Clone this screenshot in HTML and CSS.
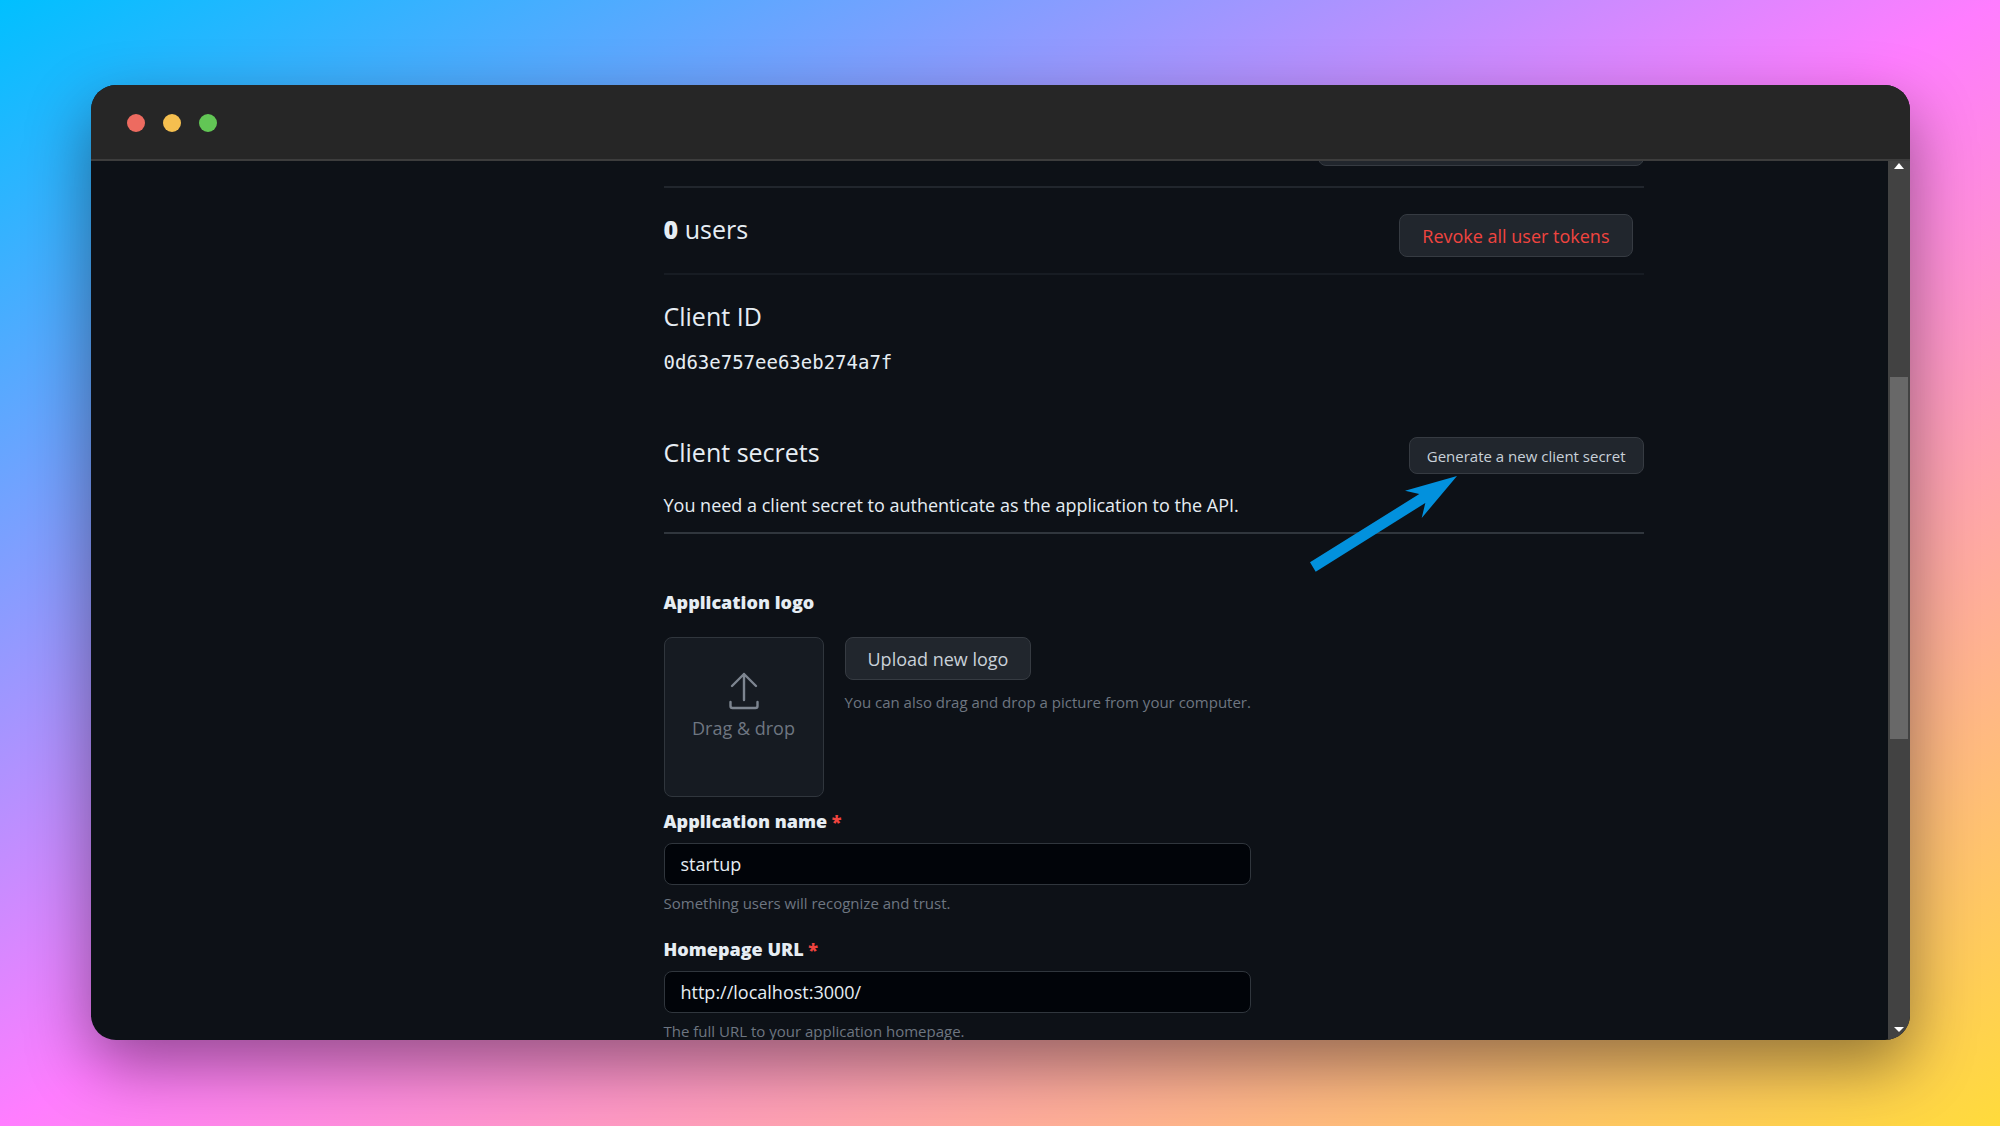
FILE: index.html
```html
<!DOCTYPE html>
<html lang="en">
<head>
    <meta charset="UTF-8">
    <meta name="viewport" content="width=device-width, initial-scale=1.0">
    <title>OAuth application settings</title>
    <link rel="stylesheet" href="styles.css">
</head>
<body>
    <div class="window">
        <div class="title-bar">
            <span class="dot dot-red"></span>
            <span class="dot dot-yellow"></span>
            <span class="dot dot-green"></span>
        </div>

        <div class="viewport">
            <div class="page">
                <main class="settings">
                    <div class="transfer">
                        <button type="button" class="btn btn-wide" aria-label="Transfer ownership"></button>
                    </div>

                    <section class="users">
                        <h2><strong>0</strong> users</h2>
                        <button type="button" class="btn btn-danger">Revoke all user tokens</button>
                    </section>

                    <section class="client-id">
                        <h2>Client ID</h2>
                        <code>0d63e757ee63eb274a7f</code>
                    </section>

                    <section class="secrets">
                        <div class="secrets-header">
                            <h2>Client secrets</h2>
                            <button type="button" class="btn btn-small">Generate a new client secret</button>
                        </div>
                        <p>You need a client secret to authenticate as the application to the API.</p>
                        <svg class="arrow" width="147" height="96" viewBox="0 0 147 96" aria-hidden="true">
                            <path d="M147 0 L95 14.7 L109.3 18 L0 86.3 L5.7 95.7 L115.3 27 L111.7 42 Z" fill="#0291dd"/>
                        </svg>
                    </section>

                    <form>
                        <h3>Application logo</h3>
                        <div class="logo">
                            <div class="drop-zone">
                                <svg width="30" height="38" viewBox="0 0 30 38" fill="none" stroke="#7d8590" stroke-width="2.4" stroke-linecap="round" stroke-linejoin="round" aria-hidden="true">
                                    <path d="M15 28V2M3 14L15 2L27 14"/>
                                    <path d="M1.5 30v4q0 2 2 2h23q2 0 2-2v-4"/>
                                </svg>
                                <span>Drag &amp; drop</span>
                            </div>
                            <div>
                                <button type="button" class="btn">Upload new logo</button>
                                <p class="note">You can also drag and drop a picture from your computer.</p>
                            </div>
                        </div>

                        <div class="form-group">
                            <label for="appName">Application name <span class="required">*</span></label>
                            <input type="text" id="appName" value="startup">
                            <p class="note">Something users will recognize and trust.</p>
                        </div>
                        <div class="form-group">
                            <label for="homepage">Homepage URL <span class="required">*</span></label>
                            <input type="text" id="homepage" value="http://localhost:3000/">
                            <p class="note">The full URL to your application homepage.</p>
                        </div>
                    </form>
                </main>
            </div>

            <div class="scrollbar" aria-hidden="true">
                <svg width="10" height="6" viewBox="0 0 10 6"><path d="M5 0L10 6H0Z" fill="#fff"/></svg>
                <div class="track"><div class="thumb"></div></div>
                <svg width="10" height="6" viewBox="0 0 10 6"><path d="M0 0H10L5 5Z" fill="#fff"/></svg>
            </div>
        </div>
    </div>
</body>
</html>
```

FILE: styles.css
```css
* {
    box-sizing: border-box;
}
body {
    margin: 0;
    height: 100vh;
    padding: 85px 90px 86px 91px;
    display: flex;
    background: linear-gradient(to bottom right, #00c0ff, #ff7dff, #ffdb3b);
    font-family: "Open Sans", "Noto Sans", sans-serif;
    font-size: 18px;
    line-height: 24px;
    color: #e6edf3;
}
h2, h3, p {
    margin: 0;
}
h2 {
    font-size: 25px;
    line-height: 30px;
    font-weight: 400;
}
h3, label {
    display: block;
    font-size: 18px;
    line-height: 24px;
    font-weight: 800;
}
.window {
    flex: 1;
    min-width: 0;
    display: flex;
    flex-direction: column;
    background-color: #0d1117;
    border-radius: 25px;
    overflow: hidden;
    box-shadow: 0 25px 64px rgba(0, 0, 0, 0.42);
}
.title-bar {
    flex: none;
    height: 76px;
    padding: 2px 36px 0;
    display: flex;
    align-items: center;
    gap: 18px;
    background-color: #262626;
    border-bottom: 2px solid #3d3d3d;
}
.dot {
    width: 18px;
    height: 18px;
    border-radius: 50%;
}
.dot-red { background-color: #ed6b60; }
.dot-yellow { background-color: #f5bf4f; }
.dot-green { background-color: #62c655; }

.viewport {
    flex: 1;
    min-height: 0;
    display: flex;
}
.page {
    flex: 1;
    min-width: 0;
    overflow: hidden;
}
.settings {
    max-width: 1308px;
    margin: -38px auto 0;
    padding-left: 328px;
}

/* Buttons */
.btn {
    height: 43px;
    padding: 0 22px;
    background-color: #21262d;
    border: 1px solid #363b42;
    border-radius: 8px;
    color: #c9d1d9;
    font-family: inherit;
    font-size: 18px;
    cursor: pointer;
}
.btn:hover {
    background-color: #30363d;
}
.btn-small {
    height: 37px;
    padding: 0 17px;
    font-size: 15px;
}
.btn-wide {
    width: 326px;
}
.btn-danger {
    color: #f0443f;
}

/* Sections */
.transfer {
    display: flex;
    justify-content: flex-end;
    padding-bottom: 20px;
    border-bottom: 2px solid #21262d;
}
.users {
    display: flex;
    justify-content: space-between;
    align-items: flex-start;
    padding: 26px 11px 16px 0;
    border-bottom: 2px solid #171c23;
}
.users strong {
    font-weight: 800;
}
.client-id {
    padding: 26px 0 63px;
}
.client-id code {
    display: block;
    margin-top: 19px;
    font-family: "DejaVu Sans Mono", monospace;
    font-size: 19px;
}
.secrets {
    position: relative;
    padding-bottom: 15px;
    border-bottom: 2px solid #30363d;
}
.secrets-header {
    display: flex;
    justify-content: space-between;
    align-items: flex-start;
    margin-bottom: 19px;
}
.arrow {
    position: absolute;
    top: 39px;
    right: 187px;
}

/* Form */
form {
    padding-top: 56px;
}
.logo {
    display: flex;
    gap: 21px;
    margin: 23px 0 12px;
}
.drop-zone {
    width: 160px;
    height: 160px;
    padding-top: 34px;
    display: flex;
    flex-direction: column;
    align-items: center;
    gap: 6px;
    background-color: #161b22;
    border: 1px solid #30363d;
    border-radius: 8px;
    color: #6e7681;
}
.note {
    font-size: 15px;
    color: #6e7681;
}
.logo .note {
    margin-top: 10px;
}
.form-group {
    width: 587px;
    max-width: 100%;
    margin-bottom: 22px;
}
.form-group input {
    display: block;
    width: 100%;
    height: 42px;
    margin: 10px 0 6px;
    padding: 0 16px;
    background-color: #010409;
    border: 1px solid #30363d;
    border-radius: 8px;
    color: #e6edf3;
    font-family: inherit;
    font-size: 18px;
}
.required {
    color: #f0443f;
}

/* Scrollbar */
.scrollbar {
    flex: none;
    width: 22px;
    padding: 2px 0 7px;
    display: flex;
    flex-direction: column;
    align-items: center;
    background-color: #424242;
}
.track {
    flex: 1;
    width: 18px;
    display: flex;
    flex-direction: column;
    padding: 208px 0 288px;
}
.thumb {
    flex: 1;
    background-color: #686868;
}
```
